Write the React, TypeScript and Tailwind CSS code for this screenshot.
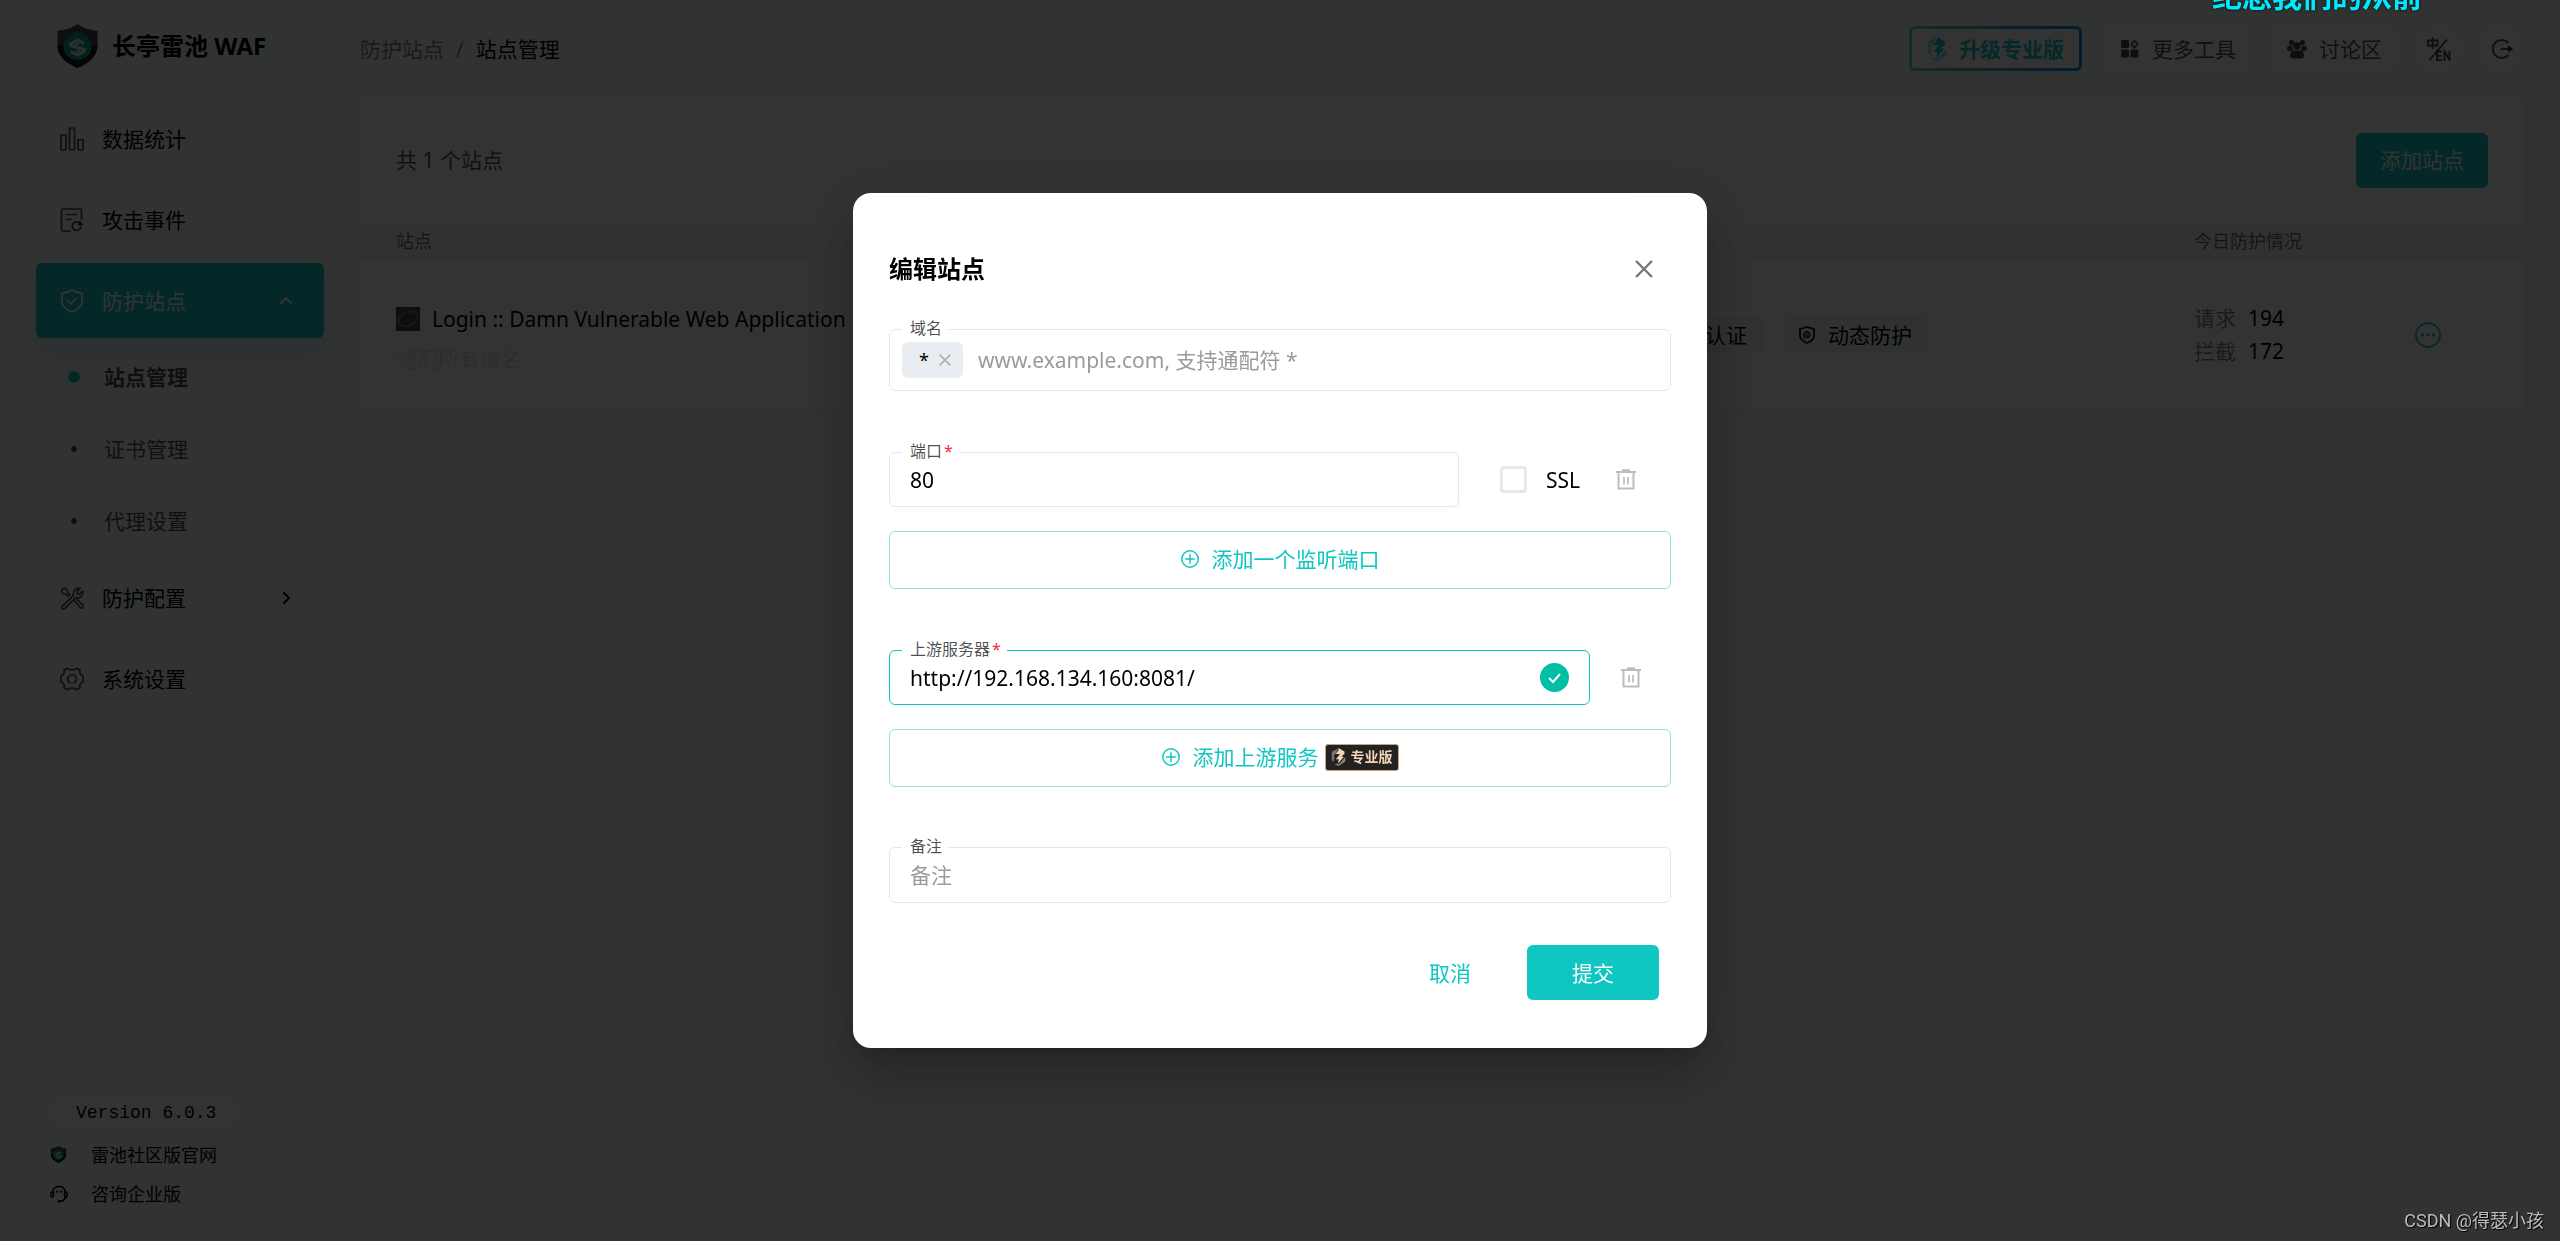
import React, { useState } from "react";

const FONT = "font-['Noto_Sans','Noto_Sans_CJK_SC',sans-serif]";

type IconProps = { className?: string };

function ShieldLogo({ className }: IconProps) {
  return (
    <svg viewBox="0 0 40 44" className={className} aria-hidden="true">
      <path d="M20 0C26 4 33 6 40 7v14c0 11-8 18-20 23C8 39 0 32 0 21V7c7-1 14-3 20-7Z" fill="#484848" />
      <path d="M0 21C0 32 8 39 20 44c12-5 20-12 20-23Z" fill="#000" opacity=".7" />
      <path d="M20 7l2 2 4-1-2 3c6 1 10 5 10 12 0 8-6 12-14 13C12 35 6 31 6 23c0-7 4-11 10-12l-2-3 4 1Z" fill="#10998c" />
      <path d="M8 11c3 2 21 2 24 0-2 4-22 4-24 0Z" fill="#10998c" />
      <path d="M26.500 19.500L20 16l-7 4v1.500l14 4V27l-7 4-6.500-3.500" fill="none" stroke="#d5efec" strokeWidth="3" />
      <path d="M17 21.500l5-3M18 28.500l5-3" stroke="#d5efec" strokeWidth="2" />
    </svg>
  );
}

function ChartIcon({ className }: IconProps) {
  return (
    <svg viewBox="0 0 24 24" className={className} fill="none" stroke="currentColor" strokeWidth="1.7" aria-hidden="true">
      <rect x="1" y="8" width="5" height="15" rx=".6" />
      <rect x="9.5" y="1" width="5" height="22" rx=".6" />
      <rect x="18" y="12.500" width="5" height="10.500" rx=".6" />
    </svg>
  );
}

function EventIcon({ className }: IconProps) {
  return (
    <svg viewBox="0 0 24 24" className={className} fill="none" stroke="currentColor" strokeWidth="1.7" strokeLinecap="round" aria-hidden="true">
      <path d="M10 23H3a1.500 1.500 0 0 1-1.500-1.500v-19A1.500 1.500 0 0 1 3 1h17a1.500 1.500 0 0 1 1.500 1.500V11" />
      <path d="M6.500 6.500h10M6.500 11.500h5" />
      <path d="M19 14.500a4.300 4.300 0 1 0 1.800 4.500" />
      <path d="M18.500 17h4l-2-3.500Z" fill="currentColor" strokeWidth="1" />
    </svg>
  );
}

function ShieldCheck({ className }: IconProps) {
  return (
    <svg viewBox="0 0 24 24" className={className} fill="none" stroke="currentColor" strokeWidth="1.700" strokeLinejoin="round" strokeLinecap="round" aria-hidden="true">
      <path d="M12 1c3 2 6.500 3 10 3.300V12c0 5-3.500 8.500-10 11C5.500 20.500 2 17 2 12V4.300C5.500 4 9 3 12 1Z" />
      <path d="M8 12l3 3 5-5.500" />
    </svg>
  );
}

function ToolsIcon({ className }: IconProps) {
  return (
    <svg viewBox="0 0 24 24" className={className} fill="none" stroke="currentColor" strokeWidth="1.700" strokeLinejoin="round" aria-hidden="true">
      <path d="M2.500 20.200L13.600 9.300c-.8-2.500.2-5 2.300-6.300 1.200-.8 2.600-1 4-.6l-3 3 .5 2.200 2.200.6 3-3c.5 2 0 4-1.600 5.400-1.500 1.300-3.400 1.600-5.200 1L5 22.400c-1 .9-2.200.8-2.900 0-.6-.7-.4-1.500.4-2.200Z" />
      <path d="M10.500 9.500L7.800 6.800C8 4.500 6 2.300 4 2.300 3 2.500 1.600 3.800 1.600 5c0 1.800 2.200 3.500 4.300 3.200L8.600 11M14.500 14.800l6 6.800c.8.800 2 .7 2.600 0 .7-.8.600-1.700-.1-2.500L16.700 13" />
    </svg>
  );
}

function GearIcon({ className }: IconProps) {
  return (
    <svg viewBox="0 0 24 24" className={className} fill="none" stroke="currentColor" strokeWidth="1.700" strokeLinejoin="round" strokeLinecap="round" aria-hidden="true">
      <path d="M7.500 1.300C9 3.500 15 3.500 16.500 1.300c1.500.3 2.700 1 3.500 2-.8 2.700.6 5 3 5.700.3 2 .3 4 0 6-2.400.7-3.800 3-3 5.700-.8 1-2 1.700-3.500 2-1.500-2.200-7.500-2.200-9 0-1.500-.3-2.700-1-3.500-2 .8-2.700-.6-5-3-5.700-.3-2-.3-4 0-6 2.400-.7 3.800-3 3-5.700.8-1 2-1.700 3.500-2Z" />
      <path d="M10 15.800a4.300 4.300 0 1 1 4.200 0" />
    </svg>
  );
}

function Chevron({ className }: IconProps) {
  return (
    <svg viewBox="0 0 12 12" className={className} fill="none" stroke="currentColor" strokeWidth="2" strokeLinecap="round" strokeLinejoin="round" aria-hidden="true">
      <path d="M4 1l5 5-5 5" />
    </svg>
  );
}

function HeadsetIcon({ className }: IconProps) {
  return (
    <svg viewBox="0 0 18 18" className={className} fill="none" stroke="currentColor" strokeWidth="1.600" strokeLinecap="round" aria-hidden="true">
      <path d="M2.800 6.500a6.300 6 0 0 1 12.400 0M15.500 12c-.5 2.500-2.500 4-5.500 4.300" />
      <rect x="1" y="7" width="2.500" height="5" rx="1.200" />
      <rect x="14.500" y="7" width="2.500" height="5" rx="1.200" />
      <path d="M7 6.500v.2M11 6.500v.2M8.500 16.300h1.500" strokeWidth="2.200" />
    </svg>
  );
}

function BoltIcon({ className }: IconProps) {
  return (
    <svg viewBox="0 0 20 24" className={className} aria-hidden="true">
      <path d="M10 0L1 5v11l2.500 2.500L5 12H3.500Z" fill="currentColor" opacity=".45" />
      <path d="M10 0l8 4.500v3L14 11l3 1-8 9 1.500-6H6.500L12 8H6l4-5Z" fill="currentColor" />
      <path d="M19 12v6l-9 6-5-2.500 3-.5 3 .5Z" fill="currentColor" opacity=".55" />
    </svg>
  );
}

function GridIcon({ className }: IconProps) {
  return (
    <svg viewBox="0 0 18 18" className={className} fill="currentColor" aria-hidden="true">
      <rect x="0" y="0" width="8" height="8" rx="1.500" />
      <rect x="0" y="9.500" width="8" height="8" rx="1.500" />
      <rect x="9.500" y="9.500" width="8" height="8" rx="1.500" />
      <path d="M13.500.8l3.400 3.400-3.400 3.400-3.400-3.400Z" fill="none" stroke="currentColor" strokeWidth="1.600" />
    </svg>
  );
}

function PeopleIcon({ className }: IconProps) {
  return (
    <svg viewBox="0 0 20 20" className={className} fill="currentColor" aria-hidden="true">
      <circle cx="4.500" cy="3.500" r="2.600" />
      <circle cx="15.500" cy="3.500" r="2.600" />
      <circle cx="10" cy="7" r="3.700" />
      <path d="M0 9.500C0 7.500 1.500 6.800 3 6.800h2c0 2 .5 3.500 1.600 4.500C5 12 4 12.300 3 12 1 12 0 11.500 0 9.500ZM20 9.500c0-2-1.500-2.700-3-2.700h-2c0 2-.5 3.500-1.600 4.500 1.600.7 2.600 1 3.600.7 2 0 3-.5 3-2.500Z" />
      <path d="M6 11.500h8c2 .8 3 2.500 3 5 0 2-1 3-3 3H6c-2 0-3-1-3-3 0-2.500 1-4.200 3-5Z" />
    </svg>
  );
}

function LanguageIcon({ className }: IconProps) {
  return (
    <svg viewBox="0 0 24 24" className={className} fill="none" stroke="currentColor" strokeWidth="1.900" aria-hidden="true">
      <path d="M1 3.500h9.500v5H1ZM5.700 0v12M20 2.500L2.500 23" />
      <path d="M15 14.500H10v8.500h5M10 18.700h4.500M17.500 24v-9.500l5 8.500v-9" />
    </svg>
  );
}

function LogoutIcon({ className }: IconProps) {
  return (
    <svg viewBox="0 0 22 22" className={className} fill="none" stroke="currentColor" strokeWidth="1.900" strokeLinejoin="round" aria-hidden="true">
      <path d="M17.500 5a9 9 0 1 0 0 12M9.500 11H19" />
      <path d="M17.500 8l4 3-4 3Z" fill="currentColor" strokeWidth="1" />
    </svg>
  );
}

function TrashIcon({ className }: IconProps) {
  return (
    <svg viewBox="0 0 20 21" className={className} fill="none" stroke="currentColor" strokeWidth="2" aria-hidden="true">
      <path d="M0 3h20M6 1.200h8M2.500 3v16.500h15V3" />
      <path d="M8 8v7.500M12 8v7.500" strokeWidth="1.700" />
    </svg>
  );
}

function PlusCircle({ className }: IconProps) {
  return (
    <svg viewBox="0 0 18 18" className={className} fill="none" stroke="currentColor" strokeWidth="1.500" aria-hidden="true">
      <circle cx="9" cy="9" r="8.200" />
      <path d="M9 4.200v9.600M4.200 9h9.600" />
    </svg>
  );
}

function CrossIcon({ className }: IconProps) {
  return (
    <svg viewBox="0 0 18 18" className={className} fill="none" stroke="currentColor" strokeWidth="2.300" aria-hidden="true">
      <path d="M1 1l16 16M17 1L1 17" />
    </svg>
  );
}

function DynamicShield({ className }: IconProps) {
  return (
    <svg viewBox="0 0 16 18" className={className} fill="none" stroke="currentColor" strokeWidth="1.700" strokeLinejoin="round" aria-hidden="true">
      <path d="M8 1l7 2v6.500c0 3.500-3 6-7 7.500-4-1.500-7-4-7-7.500V3Z" />
      <path d="M6 12.500c-1.500-1.500-1.500-4.500 0-6 1.500-1.200 4.500-1 4.500 2s-2 3.500-3 2.500c-.6-.8-.3-2.500 1-2.800" strokeWidth="1.400" />
    </svg>
  );
}

function NavItem({ icon, label, open, active }: { icon: React.ReactNode; label: string; open?: boolean; active?: boolean }) {
  return (
    <a
      href="#"
      className={
        "flex h-[75px] items-center gap-[18px] rounded-md pl-6 pr-8 " +
        (active ? "bg-[#0fc6c2] text-white shadow-[0_15px_25px_0_rgba(15,100,150,0.100)]" : "text-black")
      }
    >
      <span className={active ? "" : "text-black/70"}>{icon}</span>
      <span className="flex-1">{label}</span>
      {open !== undefined && <Chevron className={open ? "size-3 -rotate-90" : "size-3"} />}
    </a>
  );
}

function SubItem({ label, active }: { label: string; active?: boolean }) {
  return (
    <a href="#" className={"flex h-[72px] items-center gap-6 pl-8 text-black/70 " + (active ? "font-bold" : "")}>
      <span className="flex w-3 justify-center">
        <span className={active ? "size-3 rounded-full bg-[#0fc6c2]" : "size-1.5 rounded-full bg-black/70"} />
      </span>
      {label}
    </a>
  );
}

function Sidebar() {
  return (
    <aside className="flex w-[360px] shrink-0 flex-col px-9 pt-6 pb-7">
      <div className="flex h-11 items-center gap-[14px] pl-[21px]">
        <ShieldLogo className="h-11 w-[41px]" />
        <h1 className="text-2xl font-bold text-black">长亭雷池 WAF</h1>
      </div>
      <nav className="mt-[33px] flex flex-col">
        <div className="flex flex-col gap-1.5">
          <NavItem icon={<ChartIcon className="size-6" />} label="数据统计" />
          <NavItem icon={<EventIcon className="size-6" />} label="攻击事件" />
          <NavItem icon={<ShieldCheck className="size-6" />} label="防护站点" open active />
        </div>
        <div className="flex flex-col py-[3px]">
          <SubItem label="站点管理" active />
          <SubItem label="证书管理" />
          <SubItem label="代理设置" />
        </div>
        <div className="flex flex-col gap-1.5">
          <NavItem icon={<ToolsIcon className="size-6" />} label="防护配置" open={false} />
          <NavItem icon={<GearIcon className="size-6" />} label="系统设置" />
        </div>
      </nav>
      <div className="mt-auto flex flex-col text-lg text-black">
        <div className="ml-3 w-48 rounded-full bg-white pl-7 font-['Liberation_Mono','DejaVu_Sans_Mono',monospace] leading-8">Version 6.0.3</div>
        <a href="#" className="mt-1.5 flex h-[39px] items-center gap-6 pl-[14px]">
          <ShieldLogo className="size-[17px]" />
          雷池社区版官网
        </a>
        <a href="#" className="flex h-[39px] items-center gap-[23px] pl-[14px]">
          <HeadsetIcon className="size-[18px]" />
          咨询企业版
        </a>
      </div>
    </aside>
  );
}

function Header() {
  return (
    <header className="flex h-[97px] items-center justify-between">
      <nav className="flex items-center gap-3 text-black/50">
        <a href="#">防护站点</a>
        <span>/</span>
        <span className="text-black">站点管理</span>
      </nav>
      <div className="flex items-center text-black/70">
        <button className="mr-6 rounded-md bg-linear-to-r from-[#5fd8a4] to-[#0a82e6] p-[3px] font-bold text-[#0fc6c2]">
          <span className="flex h-[39px] items-center gap-3 rounded-[3px] bg-white px-[15px]">
            <BoltIcon className="h-6 w-5" />
            升级专业版
          </span>
        </button>
        <button className="mr-[22px] flex h-12 items-center gap-[13px] rounded-md bg-white/60 px-[15px]">
          <GridIcon className="size-[18px]" />
          更多工具
        </button>
        <button className="mr-5 flex h-12 items-center gap-3 rounded-md bg-white/60 px-[14px]">
          <PeopleIcon className="size-5" />
          讨论区
        </button>
        <button aria-label="切换语言" className="mr-[18px] flex size-[45px] items-center justify-center rounded-full bg-white/60">
          <LanguageIcon className="size-6" />
        </button>
        <button aria-label="退出" className="flex size-[45px] items-center justify-center rounded-full bg-white/60">
          <LogoutIcon className="size-[22px]" />
        </button>
      </div>
    </header>
  );
}

function Tag({ children }: { children: React.ReactNode }) {
  return (
    <span className="flex h-9 items-center gap-[13px] rounded-md bg-[#eef7f7] px-[17px] text-black">
      <DynamicShield className="h-[18px] w-4" />
      {children}
    </span>
  );
}

function SitesCard() {
  return (
    <section className="rounded-md bg-white shadow-[0_0_18px_2px_rgba(90,60,70,0.060)]">
      <div className="flex h-[126px] items-center justify-between px-9">
        <p className="text-black/70">共 1 个站点</p>
        <button className="h-[55px] w-[132px] rounded-md bg-[#0fc6c2] text-white">添加站点</button>
      </div>
      <table className="w-full table-fixed text-left">
        <colgroup>
          <col />
          <col className="w-[577px]" />
          <col className="w-[198px]" />
          <col className="w-[132px]" />
        </colgroup>
        <thead className="bg-[#f6f6f6] text-lg text-black/60">
          <tr className="h-9">
            <th className="pl-9 font-normal">站点</th>
            <th />
            <th className="font-normal">今日防护情况</th>
            <th />
          </tr>
        </thead>
        <tbody>
          <tr className="h-[151px]">
            <td className="pt-2 pl-9">
              <div className="flex h-9 items-center gap-3 text-black">
                <svg viewBox="0 0 24 24" className="size-6" aria-hidden="true">
                  <rect width="24" height="24" fill="#44494f" />
                  <ellipse cx="12" cy="12" rx="10" ry="7" transform="rotate(-25 12 12)" fill="none" stroke="#7c8468" strokeWidth="1.600" />
                </svg>
                Login :: Damn Vulnerable Web Application
              </div>
              <div className="mt-1 leading-9 text-black/15">通配所有域名</div>
            </td>
            <td>
              <div className="flex gap-[18px]">
                <Tag>身份认证</Tag>
                <Tag>动态防护</Tag>
              </div>
            </td>
            <td className="leading-[33px] text-black">
              <div className="flex gap-3">
                <span className="text-black/50">请求</span>194
              </div>
              <div className="flex gap-3">
                <span className="text-black/50">拦截</span>172
              </div>
            </td>
            <td className="pl-[23px]">
              <button aria-label="更多操作" className="block text-[#0fc6c2]">
                <svg viewBox="0 0 26 26" className="size-[26px]" fill="currentColor" aria-hidden="true">
                  <circle cx="13" cy="13" r="12" fill="none" stroke="currentColor" strokeWidth="1.800" />
                  <circle cx="7.500" cy="13" r="1.700" />
                  <circle cx="13" cy="13" r="1.700" />
                  <circle cx="18.500" cy="13" r="1.700" />
                </svg>
              </button>
            </td>
          </tr>
        </tbody>
      </table>
    </section>
  );
}

function Field({ id, label, required, className, children }: { id: string; label: string; required?: boolean; className: string; children: React.ReactNode }) {
  return (
    <div className={"relative flex items-center rounded-md border " + className}>
      <label htmlFor={id} className="absolute -top-[14px] left-3 bg-white pl-2 pr-1.5 text-base leading-6 text-black/70">
        {label}
        {required && <span className="ml-0.5 text-[#f4284f]">*</span>}
      </label>
      {children}
    </div>
  );
}

const inputStyle = "h-full min-w-0 flex-1 bg-transparent text-black outline-none placeholder:text-[#9b9b9b]";

function AddButton({ children }: { children: React.ReactNode }) {
  return (
    <button type="button" className="mt-6 flex h-[58px] w-full items-center justify-center rounded-md border border-[#8be3df] pb-0.5 text-[#0fc6c2]">
      <PlusCircle className="mr-[13px] size-[18px]" />
      {children}
    </button>
  );
}

function EditSiteDialog() {
  const [port, setPort] = useState("80");
  const [upstream, setUpstream] = useState("http://192.168.134.160:8081/");
  return (
    <form
      role="dialog"
      aria-labelledby="dialog-title"
      className="w-[854px] rounded-[18px] bg-white px-9 pt-[58px] pb-12 shadow-[0_16px_22px_-10px_rgba(0,0,0,0.200),0_36px_57px_4px_rgba(0,0,0,0.140),0_13px_69px_12px_rgba(0,0,0,0.120)]"
    >
      <div className="flex h-9 items-center justify-between pr-[18px]">
        <h2 id="dialog-title" className="text-2xl font-bold text-black">编辑站点</h2>
        <button type="button" aria-label="关闭" className="text-[#757575]">
          <CrossIcon className="size-[18px]" />
        </button>
      </div>

      <Field id="domain" label="域名" className="mt-[42px] h-[62px] border-[#e3e8ef] px-3">
        <span className="mr-[15px] flex h-9 items-center gap-2.5 rounded-md bg-[#e9ecf1] pl-[17px] pr-3 text-lg text-black">
          *
          <button type="button" aria-label="移除" className="text-[#aaaeb3]">
            <CrossIcon className="size-3" />
          </button>
        </span>
        <input id="domain" placeholder="www.example.com, 支持通配符 *" className={inputStyle} />
      </Field>

      <div className="mt-[61px] flex items-center">
        <Field id="port" label="端口" required className="h-[55px] flex-1 border-[#e3e8ef] px-5">
          <input id="port" value={port} onChange={(e) => setPort(e.target.value)} className={inputStyle} />
        </Field>
        <label className="ml-[41px] flex items-center gap-[19px] text-black">
          <input type="checkbox" className="size-[27px] appearance-none rounded-sm border-3 border-[#e3e8ef] checked:bg-[#0fc6c2]" />
          SSL
        </label>
        <button type="button" aria-label="删除端口" className="mr-[35px] ml-9 text-[#bdbdbd]">
          <TrashIcon className="h-[21px] w-5" />
        </button>
      </div>
      <AddButton>添加一个监听端口</AddButton>

      <div className="mt-[61px] flex items-center">
        <Field id="upstream" label="上游服务器" required className="h-[55px] flex-1 border-[#0fc6c2] px-5">
          <input id="upstream" value={upstream} onChange={(e) => setUpstream(e.target.value)} className={inputStyle} />
          <svg viewBox="0 0 29 29" className="size-[29px]" aria-hidden="true">
            <circle cx="14.500" cy="14.500" r="14.500" fill="#00bfa5" />
            <path d="M9 15l4 4 7-8" fill="none" stroke="#fff" strokeWidth="2" />
          </svg>
        </Field>
        <button type="button" aria-label="删除上游服务器" className="mr-[30px] ml-[31px] text-[#bdbdbd]">
          <TrashIcon className="h-[21px] w-5" />
        </button>
      </div>
      <AddButton>
        添加上游服务
        <span className="ml-1.5 flex h-[27px] items-center gap-[5px] rounded-[3px] border border-[#c9a37d] bg-[#222] px-[5px] text-sm font-bold text-[#f1d3b6]">
          <BoltIcon className="h-[18px] w-[15px]" />
          专业版
        </span>
      </AddButton>

      <Field id="remark" label="备注" className="mt-[60px] h-14 border-[#e3e8ef] px-5">
        <input id="remark" placeholder="备注" className={inputStyle} />
      </Field>

      <div className="mt-[42px] flex items-center justify-end gap-4 pr-3">
        <button type="button" className="h-[55px] px-10 text-[#0fc6c2]">取消</button>
        <button type="button" className="h-[55px] w-[132px] rounded-md bg-[#0fc6c2] text-white">提交</button>
      </div>
    </form>
  );
}

export default function App() {
  return (
    <div className={"relative min-h-screen overflow-hidden bg-[#f4fcf9] text-[21px] leading-8 " + FONT}>
      <div className="flex min-h-screen">
        <Sidebar />
        <main className="min-w-0 flex-1 pr-9">
          <Header />
          <SitesCard />
        </main>
      </div>
      <div className="fixed inset-0 flex items-center justify-center bg-black/80">
        <EditSiteDialog />
      </div>
      <p className="absolute -top-[22px] right-[138px] text-[30px] leading-9 font-bold text-[#00eaff] [text-shadow:0_0_3px_#000]">纪念我们的从前</p>
      <p className="absolute right-4 bottom-2 font-['Roboto','Noto_Sans_CJK_SC',sans-serif] text-lg leading-6 text-[#bbb] [text-shadow:1px_1px_1px_#000]">CSDN @得瑟小孩</p>
    </div>
  );
}
